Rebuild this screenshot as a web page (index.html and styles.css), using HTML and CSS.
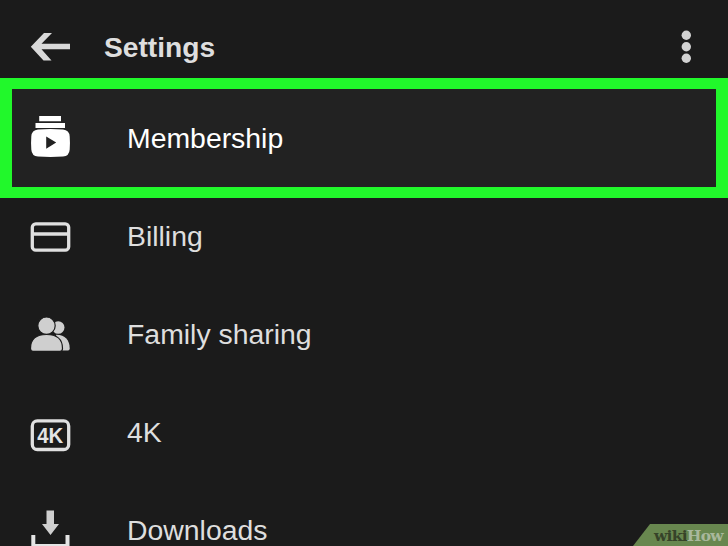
FILE: index.html
```html
<!DOCTYPE html>
<html lang="en">
<head>
<meta charset="utf-8">
<title>Settings</title>
<link rel="stylesheet" href="styles.css">
</head>
<body>
<div class="screen">
  <header class="bar">
    <svg class="back" width="42" height="30" viewBox="0 0 42 30"><path d="M14 1H22L11.500 11.700H40V17.300H11.500L21.500 28.500H13.500L0.800 14.700Z"/></svg>
    <h1 class="title">Settings</h1>
    <svg class="more" width="12" height="34" viewBox="0 0 12 34"><circle cx="6.300" cy="5.300" r="4.700"/><circle cx="6.300" cy="16.800" r="4.700"/><circle cx="6.300" cy="28.300" r="4.700"/></svg>
  </header>
  <ul class="list">
    <li class="row selected">
      <svg class="icon" width="42" height="48" viewBox="0 0 42 48"><path d="M9.200 2H31V7.300H9.200ZM5.500 9H35V14H5.500Z"/><path fill-rule="evenodd" d="M8 15.500Q20.500 14.700 33 15.500Q39.300 16 39.700 22.500Q40.200 29 39.700 35.500Q39.300 42 33 42.500Q20.500 43.300 8 42.500Q1.700 42 1.300 35.500Q0.800 29 1.300 22.500Q1.700 16 8 15.500ZM16.200 22.500V34.700L26.200 28.600Z"/></svg>
      <span class="label">Membership</span>
    </li>
    <li class="row">
      <svg class="icon" width="42" height="48" viewBox="0 0 42 48"><rect class="line" x="2.300" y="11.800" width="36.400" height="26.400" rx="3.500"/><path class="line" d="M2.300 22H38.700"/></svg>
      <span class="label">Billing</span>
    </li>
    <li class="row">
      <svg class="icon" width="42" height="48" viewBox="0 0 42 48"><g class="soft"><circle cx="28.200" cy="17.500" r="6.300"/><path d="M26 24.700C35 24.500 39.700 30 39.700 38.500Q39.700 40.500 38 40.500H29Z"/></g><g class="cutout"><circle cx="16.500" cy="15.700" r="8.700"/><path d="M0.500 38.500C0.500 28.500 7 24.500 16.500 24.500S32.500 28.500 32.500 38.500Q32.500 41.300 30 41.300H3Q0.500 41.300 0.500 38.500Z"/></g></svg>
      <span class="label">Family sharing</span>
    </li>
    <li class="row">
      <svg class="icon" width="42" height="48" viewBox="0 0 42 48"><rect class="line" x="2.300" y="12.900" width="36.400" height="28.600" rx="5"/><text class="badge" x="7.300" y="35.300" textLength="26" lengthAdjust="spacingAndGlyphs">4K</text></svg>
      <span class="label">4K</span>
    </li>
    <li class="row">
      <svg class="icon" width="42" height="48" viewBox="0 0 42 48"><path class="soft" d="M16.500 4.500H24V18H29L20.500 29L12 18H16.500Z"/><path d="M1.300 29H5.300V38H35.500V29H39.500V42H1.300Z"/></svg>
      <span class="label">Downloads</span>
    </li>
  </ul>
  <div class="mark"><span class="wiki">wiki</span><span class="how">How</span></div>
</div>
</body>
</html>
```
FILE: styles.css
```css
* { box-sizing: border-box; }
body { margin: 0; background: #1b1b1b; }
.screen {
  position: relative;
  width: 728px;
  height: 546px;
  overflow: hidden;
  background: #1b1b1b;
  color: #dedede;
  font-family: "Liberation Sans", Arial, sans-serif;
}
.bar {
  display: flex;
  align-items: center;
  height: 89px;
  padding: 5px 36px 0 30px;
}
.back { fill: #d9d9d9; }
.title {
  margin: 0 auto 0 32px;
  font-size: 28.200px;
  line-height: 32px;
  font-weight: 700;
}
.more { fill: #d2d2d2; }
.list { margin: 0; padding: 0; list-style: none; }
.row {
  position: relative;
  display: flex;
  align-items: center;
  height: 98px;
  padding-left: 30px;
}
.icon { display: block; margin-right: 55px; fill: #e4e4e4; }
.label { font-size: 28.400px; line-height: 32px; }
.selected { background: #222; color: #fff; }
.selected .icon { fill: #fff; }
.selected::after {
  content: "";
  position: absolute;
  inset: -11px 0;
  border: solid #21f82b;
  border-width: 11px 12px;
}
.line { fill: none; stroke: #e0e0e0; stroke-width: 3.300px; }
.soft { fill: #cfcfcf; }
.cutout { fill: #cfcfcf; stroke: #1b1b1b; stroke-width: 1.200px; }
.badge { font: 700 22.500px "Liberation Sans", Arial, sans-serif; }
.mark {
  position: absolute;
  right: 0;
  bottom: 0;
  width: 95px;
  height: 22px;
  padding-left: 21px;
  background: #68874f;
  clip-path: polygon(17px 0, 100% 0, 100% 100%, 0 100%);
  font: 700 15.500px/23px "DejaVu Serif", serif;
  letter-spacing: -0.750px;
  white-space: nowrap;
}
.wiki { color: #364329; }
.how { color: #a9b89c; }
```
